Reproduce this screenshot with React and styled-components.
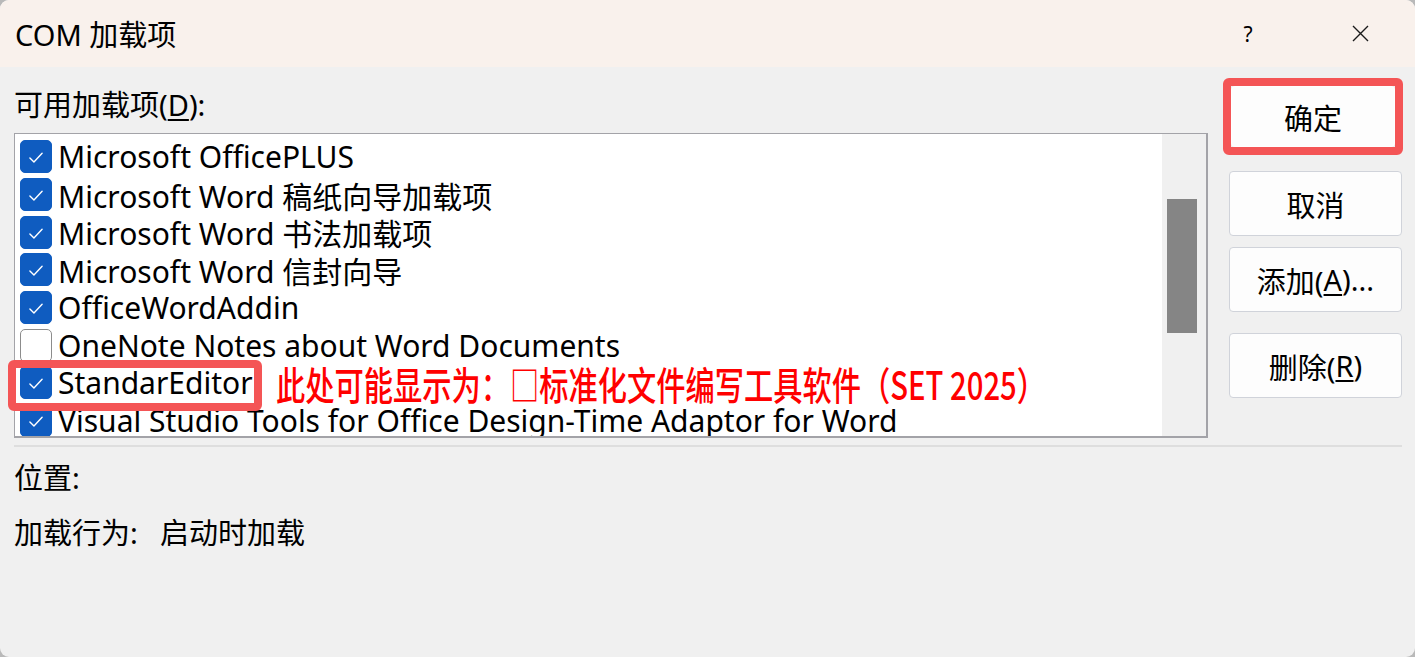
import React from 'react';
import styled, { createGlobalStyle } from 'styled-components';

const GlobalStyle = createGlobalStyle`
    html, body {
        margin: 0;
        padding: 0;
        background: #b9b9b9;
    }
    body {
        font-family: "Noto Sans", "Noto Sans CJK SC", sans-serif;
        color: #000;
    }
`;

const UI_FONT = '"Noto Sans", "Noto Sans CJK SC", sans-serif';
const ROW_HEIGHT = 37.7;

const Window = styled.div`
    width: 100vw;
    height: 100vh;
    display: flex;
    flex-direction: column;
    background: #f0f0f0;
    border-radius: 9px;
    overflow: hidden;
    font-family: ${UI_FONT};
`;

const TitleBar = styled.div`
    height: 67px;
    flex: none;
    display: flex;
    align-items: center;
    padding-left: 15px;
    background: #f9f1ec;
`;

const Title = styled.div`
    flex: 1;
    font-size: 29px;
    padding-bottom: 2px;
`;

const TitleButton = styled.div`
    width: 56px;
    height: 40px;
    display: flex;
    align-items: center;
    justify-content: center;
    font-size: 21px;
    margin-right: ${({ right }) => right || 0}px;
`;

const Body = styled.div`
    flex: 1;
    display: flex;
    flex-direction: column;
    padding: 11px 12px 0 14px;
`;

const Main = styled.div`
    display: flex;
    align-items: flex-start;
`;

const LeftPane = styled.div`
    width: 1194px;
    display: flex;
    flex-direction: column;
`;

const Label = styled.div`
    font-size: 29px;
    line-height: 36px;
    margin-top: 9px;
    margin-bottom: 10px;
    u {
        text-underline-offset: 3px;
    }
`;

const ListBox = styled.div`
    position: relative;
    height: 305px;
    display: flex;
    border: 1px solid #a3a3a8;
    border-right-width: 2px;
    border-bottom-width: 2px;
    box-sizing: border-box;
    background: #fff;
`;

const Viewport = styled.div`
    flex: 1;
    overflow: hidden;
    padding-top: 4px;
`;

const Row = styled.div`
    height: ${ROW_HEIGHT}px;
    display: flex;
    align-items: center;
    padding-left: 5px;
    font-size: 30px;
    white-space: nowrap;
`;

const Box = styled.div`
    width: 32px;
    height: 33px;
    flex: none;
    box-sizing: border-box;
    border-radius: 5px;
    margin-right: 6px;
    display: flex;
    align-items: center;
    justify-content: center;
    background: ${({ checked }) => (checked ? '#0f5cc0' : '#fff')};
    border: 1.5px solid ${({ checked }) => (checked ? '#0f5cc0' : '#8c8c8c')};
`;

const Track = styled.div`
    width: 44px;
    flex: none;
    background: #f0f0f0;
`;

const Thumb = styled.div`
    width: 30px;
    height: 134px;
    margin: 65px 0 0 5px;
    background: #858585;
`;

const Frame = styled.div`
    position: absolute;
    left: -7px;
    top: 226px;
    width: 254px;
    height: 51px;
    box-sizing: border-box;
    border: 8px solid #f45556;
    border-radius: 6px;
    pointer-events: none;
`;

const Note = styled.div`
    position: absolute;
    left: 261px;
    top: 223px;
    font-family: "Noto Sans CJK SC", sans-serif;
    font-weight: 500;
    font-size: 39px;
    line-height: 52px;
    color: #ff0000;
    white-space: nowrap;
    transform: scaleX(0.75);
    transform-origin: left center;
`;

const ButtonColumn = styled.div`
    margin-left: 15px;
    width: 180px;
    display: flex;
    flex-direction: column;
`;

const Highlight = styled.div`
    border: 8px solid #f45556;
    border-radius: 6px;
    height: 77px;
    box-sizing: border-box;
    display: flex;
`;

const Button = styled.div`
    box-sizing: border-box;
    height: ${({ primary }) => (primary ? '100%' : '65px')};
    width: ${({ primary }) => (primary ? '100%' : '173px')};
    margin-left: ${({ primary }) => (primary ? 0 : 6)}px;
    margin-top: ${({ gap }) => gap || 0}px;
    display: flex;
    align-items: center;
    justify-content: center;
    font-size: 29px;
    background: #fdfdfd;
    border: 1px solid ${({ primary }) => (primary ? '#fff' : '#d0d3da')};
    border-radius: 4px;
    u {
        text-underline-offset: 3px;
    }
`;

const Separator = styled.div`
    height: 2px;
    margin-top: 7px;
    margin-right: 1px;
    background: #dedede;
`;

const InfoRow = styled.div`
    display: flex;
    font-size: 29px;
    line-height: 36px;
    margin-top: ${({ gap }) => gap}px;
`;

const InfoLabel = styled.div`
    width: 146px;
`;

const Check = () => (
    <svg width="32" height="33" viewBox="0 0 32 33">
        <path d="M9.5 18 L13.8 22.3 L22.5 13" fill="none" stroke="#fff" strokeWidth="1.5" strokeLinecap="round" strokeLinejoin="round" />
    </svg>
);

const CloseIcon = () => (
    <svg width="17" height="17" viewBox="0 0 17 17">
        <path d="M1 1 L16 16 M16 1 L1 16" stroke="#1a1a1a" strokeWidth="1.4" />
    </svg>
);

const addins = [
    { name: 'Microsoft OfficePLUS', checked: true },
    { name: 'Microsoft Word 稿纸向导加载项', checked: true },
    { name: 'Microsoft Word 书法加载项', checked: true },
    { name: 'Microsoft Word 信封向导', checked: true },
    { name: 'OfficeWordAddin', checked: true },
    { name: 'OneNote Notes about Word Documents', checked: false },
    { name: 'StandarEditor', checked: true },
    { name: 'Visual Studio Tools for Office Design-Time Adaptor for Word', checked: true },
];

class App extends React.PureComponent {
    render() {
        return (
            <Window>
                <GlobalStyle />
                <TitleBar>
                    <Title>COM 加载项</Title>
                    <TitleButton right={56}>?</TitleButton>
                    <TitleButton right={27}><CloseIcon /></TitleButton>
                </TitleBar>
                <Body>
                    <Main>
                        <LeftPane>
                            <Label>可用加载项(<u>D</u>):</Label>
                            <ListBox>
                                <Viewport>
                                    {addins.map((item) => (
                                        <Row key={item.name}>
                                            <Box checked={item.checked}>{item.checked && <Check />}</Box>
                                            {item.name}
                                        </Row>
                                    ))}
                                </Viewport>
                                <Track>
                                    <Thumb />
                                </Track>
                                <Frame />
                                <Note>此处可能显示为：□标准化文件编写工具软件（SET 2025）</Note>
                            </ListBox>
                        </LeftPane>
                        <ButtonColumn>
                            <Highlight>
                                <Button primary>确定</Button>
                            </Highlight>
                            <Button gap={16}>取消</Button>
                            <Button gap={11}>添加(<u>A</u>)...</Button>
                            <Button gap={21}>删除(<u>R</u>)</Button>
                        </ButtonColumn>
                    </Main>
                    <Separator />
                    <InfoRow gap={13}>
                        <InfoLabel>位置:</InfoLabel>
                    </InfoRow>
                    <InfoRow gap={19}>
                        <InfoLabel>加载行为:</InfoLabel>
                        <div>启动时加载</div>
                    </InfoRow>
                </Body>
            </Window>
        );
    }
}

export default App;
